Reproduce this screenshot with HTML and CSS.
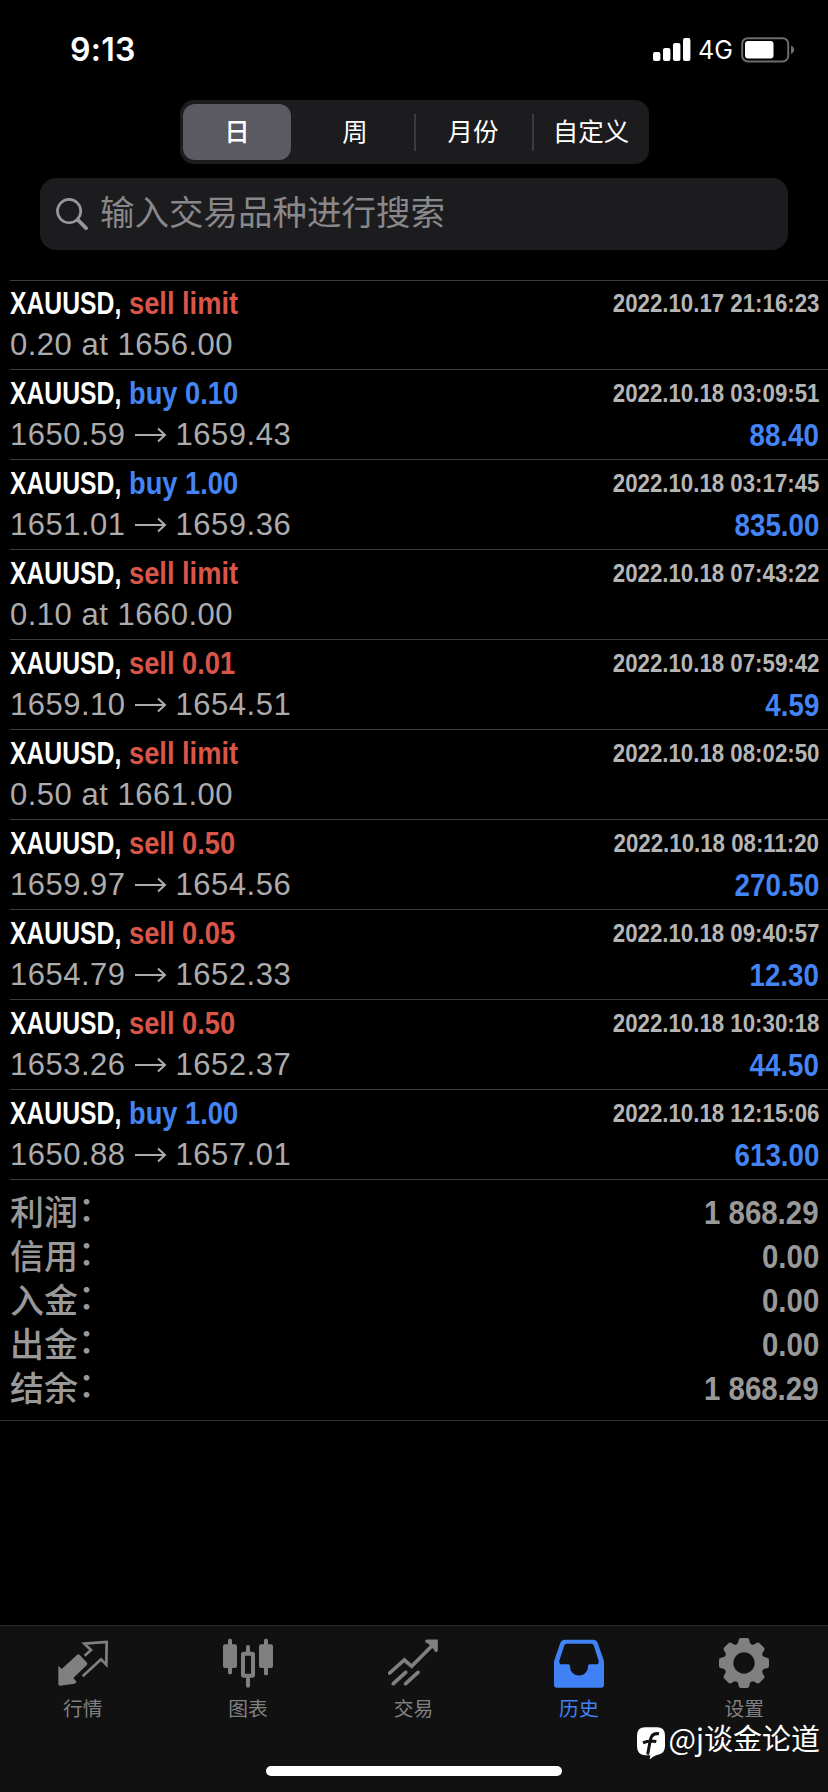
FILE: index.html
```
<!DOCTYPE html>
<html lang="zh-CN">
<head>
<meta charset="utf-8">
<title>历史</title>
<link rel="stylesheet" href="styles.css">
</head>
<body>
<div class="screen">
  <header class="status">
    <span class="time">9:13</span>
    <div class="status-right">
      <svg class="signal" viewBox="0 0 38 24"><rect x="0" y="15" width="7.4" height="9" rx="2"/><rect x="10" y="11" width="7.4" height="13" rx="2"/><rect x="20" y="6" width="7.4" height="18" rx="2"/><rect x="30" y="1" width="7.4" height="23" rx="2"/></svg>
      <span class="network">4G</span>
      <svg class="battery" viewBox="0 0 54 26"><rect x="1.2" y="1.2" width="46" height="23.2" rx="5.5" fill="none" stroke="#6c6c6c" stroke-width="2"/><rect x="4" y="4" width="28.500" height="17.500" rx="3" fill="#fff"/><path d="M50 8.500Q53.200 10 53.200 12.800T50 17.100Z" fill="#6c6c6c"/></svg>
    </div>
  </header>

  <nav class="segments">
    <span class="segment active">日</span>
    <span class="segment">周</span>
    <span class="segment split">月份</span>
    <span class="segment split">自定义</span>
  </nav>

  <div class="search">
    <svg class="search-icon" viewBox="0 0 34 34"><circle cx="13.500" cy="13.500" r="12" fill="none" stroke="#98989c" stroke-width="2.800"/><path d="M22.500 22.500 31 31" stroke="#98989c" stroke-width="3.800" stroke-linecap="round"/></svg>
    <span class="placeholder">输入交易品种进行搜索</span>
  </div>

  <main class="history" id="history"></main>

  <section class="summary">
    <div class="total"><span class="total-name">利润<i>：</i></span><b class="total-value">1 868.29</b></div>
    <div class="total"><span class="total-name">信用<i>：</i></span><b class="total-value">0.00</b></div>
    <div class="total"><span class="total-name">入金<i>：</i></span><b class="total-value">0.00</b></div>
    <div class="total"><span class="total-name">出金<i>：</i></span><b class="total-value">0.00</b></div>
    <div class="total"><span class="total-name">结余<i>：</i></span><b class="total-value">1 868.29</b></div>
  </section>

  <footer class="tabbar">
    <div class="tabs">
      <div class="tab">
        <svg class="tab-icon" viewBox="170 85 150 150"><path d="M171 168 181 178 227 136Q231 132 235 136L256 158Q260 163 256 167L216 205 226 217 220 222 176 228Q171 228 171 223Z" fill="currentColor"/><path d="M250 138 269 121 249 102 316 97 315 165 299 149 244 200" fill="none" stroke="currentColor" stroke-width="8"/></svg>
        <span>行情</span>
      </div>
      <div class="tab">
        <svg class="tab-icon" viewBox="669 85 150 150" fill="currentColor"><rect x="669" y="104" width="42" height="71" rx="6"/><rect x="684" y="87" width="12" height="107" rx="5"/><rect x="729" y="132" width="30" height="66" rx="2" fill="none" stroke="currentColor" stroke-width="12"/><path d="M738 130V111Q738 106 744 106T750 111V130ZM738 200V228Q738 234 744 234T750 228V200Z"/><rect x="777" y="104" width="42" height="71" rx="6"/><rect x="792" y="87" width="12" height="110" rx="5"/></svg>
        <span>图表</span>
      </div>
      <div class="tab">
        <svg class="tab-icon" viewBox="85 85 150 150" fill="none" stroke="currentColor" stroke-width="11" stroke-linecap="round"><path d="M90 190 134 151 156 170 226 99M101 222 138 188M138 222 175 188"/><path d="M202 95H229V122M208 97 227 116"/></svg>
        <span>交易</span>
      </div>
      <div class="tab selected">
        <svg class="tab-icon" viewBox="579 85 150 150"><path fill="currentColor" fill-rule="evenodd" d="M579 158Q579 155 580 152L598 99Q602 90 611 90H697Q706 90 710 99L728 152Q729 155 729 158V225Q729 234 720 234H588Q579 234 579 225ZM617 102Q612 102 610 107L595 153Q594 164 602 164H622Q627 164 627 169C627 207 681 207 681 169Q681 164 686 164H706Q714 164 713 153L698 107Q696 102 691 102Z"/></svg>
        <span>历史</span>
      </div>
      <div class="tab">
        <svg class="tab-icon" viewBox="-75 -75 150 150" fill="currentColor"><defs><path id="tooth" d="M-24-52C-20-57-17-60-16-69Q-15-75-9-75H9Q15-75 16-69C17-60 20-57 24-52Z"/></defs><path fill-rule="evenodd" d="M0-60A60 60 0 0 1 0 60A60 60 0 0 1 0-60ZM0-32A32 32 0 0 0 0 32A32 32 0 0 0 0-32Z"/><use href="#tooth"/><use href="#tooth" transform="rotate(45)"/><use href="#tooth" transform="rotate(90)"/><use href="#tooth" transform="rotate(135)"/><use href="#tooth" transform="rotate(180)"/><use href="#tooth" transform="rotate(225)"/><use href="#tooth" transform="rotate(270)"/><use href="#tooth" transform="rotate(315)"/></svg>
        <span>设置</span>
      </div>
    </div>
    <div class="home-bar"></div>
    <div class="credit">
      <svg class="credit-logo" viewBox="0 0 84 98"><path fill="#fff" d="M24 0H60Q84 0 84 25V57Q84 76 66 82Q53 84 38 97L40 84H24Q0 82 0 57V25Q0 0 24 0Z"/><path d="M66 20Q45 16 40 38L32 82M18 47Q34 39 58 43" fill="none" stroke="#111" stroke-width="9"/></svg>
      <span class="credit-name">@j谈金论道</span>
    </div>
  </footer>
</div>
<script src="history.js"></script>
</body>
</html>
```

FILE: styles.css
```
body {
  margin: 0;
  background: #000;
  color: #fff;
  font-family: "Liberation Sans", "Noto Sans CJK SC", sans-serif;
}

.screen {
  display: flex;
  flex-direction: column;
  width: 828px;
  height: 1792px;
  overflow: hidden;
}

/* Status bar */
.status {
  display: flex;
  justify-content: space-between;
  height: 100px;
  box-sizing: border-box;
  padding: 30px 33px 0 70px;
}

.time {
  font: 600 32px/40px Inter, sans-serif;
  letter-spacing: 0.3px;
}

.status-right {
  display: flex;
  align-items: flex-start;
}

.signal {
  width: 38px;
  height: 24px;
  margin-top: 7px;
  fill: #fff;
}

.network {
  margin-left: 7px;
  width: 43px;
  font: 400 25px/40px Inter, sans-serif;
}

.battery {
  width: 54px;
  height: 26px;
  margin-top: 7px;
}

/* Period selector */
.segments {
  display: grid;
  grid-template-columns: 113px 118px 118px 118px;
  width: 469px;
  height: 64px;
  margin-left: 180px;
  box-sizing: border-box;
  padding: 4px 0 4px 3px;
  border-radius: 14px;
  background: #1c1c1e;
  flex: none;
}

.segment {
  display: flex;
  align-items: center;
  justify-content: center;
  height: 56px;
  font-size: 25.500px;
  line-height: 56px;
}

.segment.active {
  width: 108px;
  border-radius: 12px;
  background: #5b5a60;
  font-weight: 500;
}

.segment.split {
  background: linear-gradient(#3b3b3e, #3b3b3e) left center / 2px 37px no-repeat;
}

/* Search */
.search {
  display: flex;
  align-items: center;
  flex: none;
  height: 72px;
  margin: 14px 40px 30px;
  padding-left: 16px;
  box-sizing: border-box;
  border-radius: 16px;
  background: #1c1c1e;
}

.search-icon {
  width: 33px;
  height: 33px;
}

.placeholder {
  margin: -2px 0 0 11px;
  color: #88888b;
  font-size: 34.500px;
  line-height: 50px;
}

/* Deals */
.history {
  flex: none;
}

.deal {
  display: flex;
  justify-content: space-between;
  height: 90px;
  margin-left: 10px;
  padding-right: 9px;
  box-sizing: border-box;
  border-top: 1px solid #3c3c3c;
  white-space: nowrap;
}

.deal:first-child {
  height: 89px;
}

.deal-main,
.deal-side {
  padding-top: 3px;
}

.deal:first-child .deal-main,
.deal:first-child .deal-side {
  padding-top: 2px;
}

.deal-title {
  display: flex;
  height: 41px;
  font-size: 31.500px;
  font-weight: 700;
  line-height: 40px;
}

.symbol {
  width: 118.500px;
  transform: scaleX(.785);
  transform-origin: left;
}

.side {
  transform: scaleX(.865);
  transform-origin: left;
}

.sell { color: #d95548; }
.buy { color: #4584f4; }

.deal-price {
  display: flex;
  align-items: center;
  height: 42px;
  color: #acacae;
  font-size: 31px;
  line-height: 42px;
  letter-spacing: .5px;
}

.arrow {
  width: 32px;
  height: 16px;
  margin: 0 9px;
}

.deal-side {
  display: flex;
  flex-direction: column;
  align-items: flex-end;
  font-weight: 700;
}

.date {
  height: 42px;
  color: #b5b5b5;
  font-size: 26px;
  line-height: 40px;
  transform: scaleX(.856);
  transform-origin: right;
}

.profit {
  color: #4584f4;
  font-size: 31.500px;
  line-height: 40px;
  transform: scaleX(.88);
  transform-origin: right;
}

/* Totals */
.summary {
  flex: none;
  height: 242px;
  box-sizing: border-box;
  padding: 12px 9px 0 10px;
  border-bottom: 1px solid #333;
  background: linear-gradient(#3c3c3c, #3c3c3c) 10px 0 / 100% 1px no-repeat;
  color: #999;
}

.total {
  display: flex;
  justify-content: space-between;
  height: 44px;
  line-height: 44px;
}

.total-name {
  font-size: 34px;
  font-weight: 500;
}

.total-name i {
  display: inline-block;
  font-style: normal;
  transform: translateY(-4px);
}

.total-value {
  font-size: 32.500px;
  transform: scaleX(.905);
  transform-origin: right;
}

/* Tab bar */
.tabbar {
  position: relative;
  margin-top: auto;
  height: 167px;
  box-sizing: border-box;
  border-top: 1px solid #2a2a2a;
  background: #111;
}

.tabs {
  display: grid;
  grid-template-columns: repeat(5, 1fr);
  padding-right: 1px;
}

.tab {
  display: flex;
  flex-direction: column;
  align-items: center;
  padding-top: 12px;
  color: #808080;
  font-size: 19.800px;
  line-height: 30px;
}

.tab.selected {
  color: #4082f5;
}

.tab-icon {
  width: 50px;
  height: 50px;
  margin-bottom: 6px;
}

.home-bar {
  width: 296px;
  height: 10px;
  margin: 42px auto 0;
  border-radius: 5px;
  background: #fff;
}

.credit {
  position: absolute;
  right: 8px;
  top: 91px;
  display: flex;
  align-items: flex-start;
}

.credit-logo {
  width: 28px;
  height: 33px;
  margin: 10px 4px 0 0;
}

.credit-name {
  font-family: "Noto Sans CJK SC", sans-serif;
  font-size: 29px;
  line-height: 40px;
}
```

FILE: history.js
```
const deals = [
  ["sell limit", "0.20 at 1656.00", "2022.10.17 21:16:23", ""],
  ["buy 0.10", "1650.59>1659.43", "2022.10.18 03:09:51", "88.40"],
  ["buy 1.00", "1651.01>1659.36", "2022.10.18 03:17:45", "835.00"],
  ["sell limit", "0.10 at 1660.00", "2022.10.18 07:43:22", ""],
  ["sell 0.01", "1659.10>1654.51", "2022.10.18 07:59:42", "4.59"],
  ["sell limit", "0.50 at 1661.00", "2022.10.18 08:02:50", ""],
  ["sell 0.50", "1659.97>1654.56", "2022.10.18 08:11:20", "270.50"],
  ["sell 0.05", "1654.79>1652.33", "2022.10.18 09:40:57", "12.30"],
  ["sell 0.50", "1653.26>1652.37", "2022.10.18 10:30:18", "44.50"],
  ["buy 1.00", "1650.88>1657.01", "2022.10.18 12:15:06", "613.00"]
];

const arrow = '<svg class="arrow" viewBox="0 0 32 16" fill="none" stroke="currentColor" stroke-width="2"><path d="M0 8H30M23 1.500 30 8 23 14.500"/></svg>';

document.getElementById("history").innerHTML = deals.map(([side, price, date, profit]) => `
  <article class="deal">
    <div class="deal-main">
      <div class="deal-title"><span class="symbol">XAUUSD,</span><span class="side ${side.split(" ")[0]}">${side}</span></div>
      <div class="deal-price">${price.split(">").map(p => `<span>${p}</span>`).join(arrow)}</div>
    </div>
    <div class="deal-side"><span class="date">${date}</span><span class="profit">${profit}</span></div>
  </article>`).join("");
```
